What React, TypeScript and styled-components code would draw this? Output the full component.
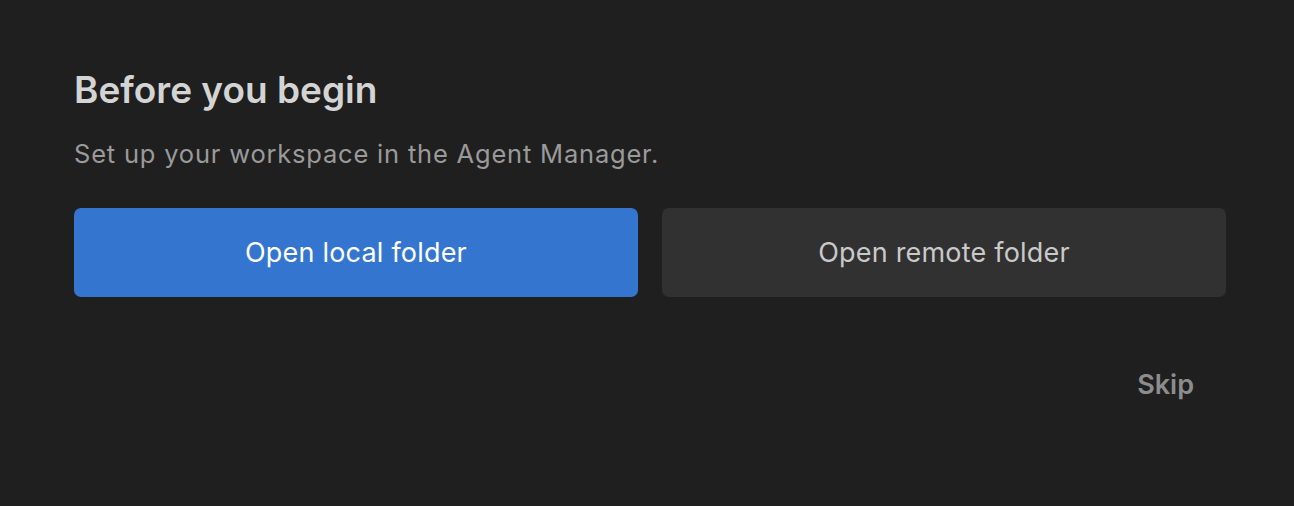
import React from 'react';
import styled, { createGlobalStyle } from 'styled-components';

const GlobalStyle = createGlobalStyle`
  html, body {
    margin: 0;
    padding: 0;
    background-color: #1f1f1f;
  }
  body {
    font-family: Inter, "Noto Sans", "Liberation Sans", sans-serif;
    -webkit-font-smoothing: antialiased;
  }
`;

const Page = styled.div`
  box-sizing: border-box;
  width: 100%;
  min-height: 506px;
  padding: 68px 68px 0 74px;
  background-color: #1f1f1f;
`;

const Panel = styled.div`
  display: flex;
  flex-direction: column;
  width: 1152px;
`;

const Title = styled.h1`
  margin: 0;
  font-size: 37px;
  line-height: 44px;
  font-weight: 600;
  letter-spacing: 0;
  color: #d4d4d4;
`;

const Subtitle = styled.p`
  margin: 26px 0 0;
  font-size: 25.5px;
  line-height: 32px;
  font-weight: 400;
  letter-spacing: 0.8px;
  color: #9a9a9a;
`;

const ButtonRow = styled.div`
  display: grid;
  grid-template-columns: 1fr 1fr;
  gap: 24px;
  margin-top: 38px;
`;

const ActionButton = styled.button<{ $primary?: boolean }>`
  height: 89px;
  border: none;
  border-radius: 7px;
  font-family: inherit;
  font-size: 27px;
  font-weight: 420;
  letter-spacing: 0.2px;
  cursor: pointer;
  background-color: ${(p) => (p.$primary ? '#3476cf' : '#313131')};
  color: ${(p) => (p.$primary ? '#ffffff' : '#c9c9c9')};
`;

const Footer = styled.div`
  display: flex;
  justify-content: flex-end;
  margin-top: 63px;
`;

const SkipButton = styled.button`
  border: none;
  background: none;
  padding: 8px 32px;
  font-family: inherit;
  font-size: 27px;
  font-weight: 600;
  color: #8c8c8c;
  cursor: pointer;
`;

const App: React.FC = () => {
  return (
    <>
      <GlobalStyle />
      <Page>
        <Panel>
          <Title>Before you begin</Title>
          <Subtitle>Set up your workspace in the Agent Manager.</Subtitle>
          <ButtonRow>
            <ActionButton $primary>Open local folder</ActionButton>
            <ActionButton>Open remote folder</ActionButton>
          </ButtonRow>
          <Footer>
            <SkipButton>Skip</SkipButton>
          </Footer>
        </Panel>
      </Page>
    </>
  );
};

export default App;
